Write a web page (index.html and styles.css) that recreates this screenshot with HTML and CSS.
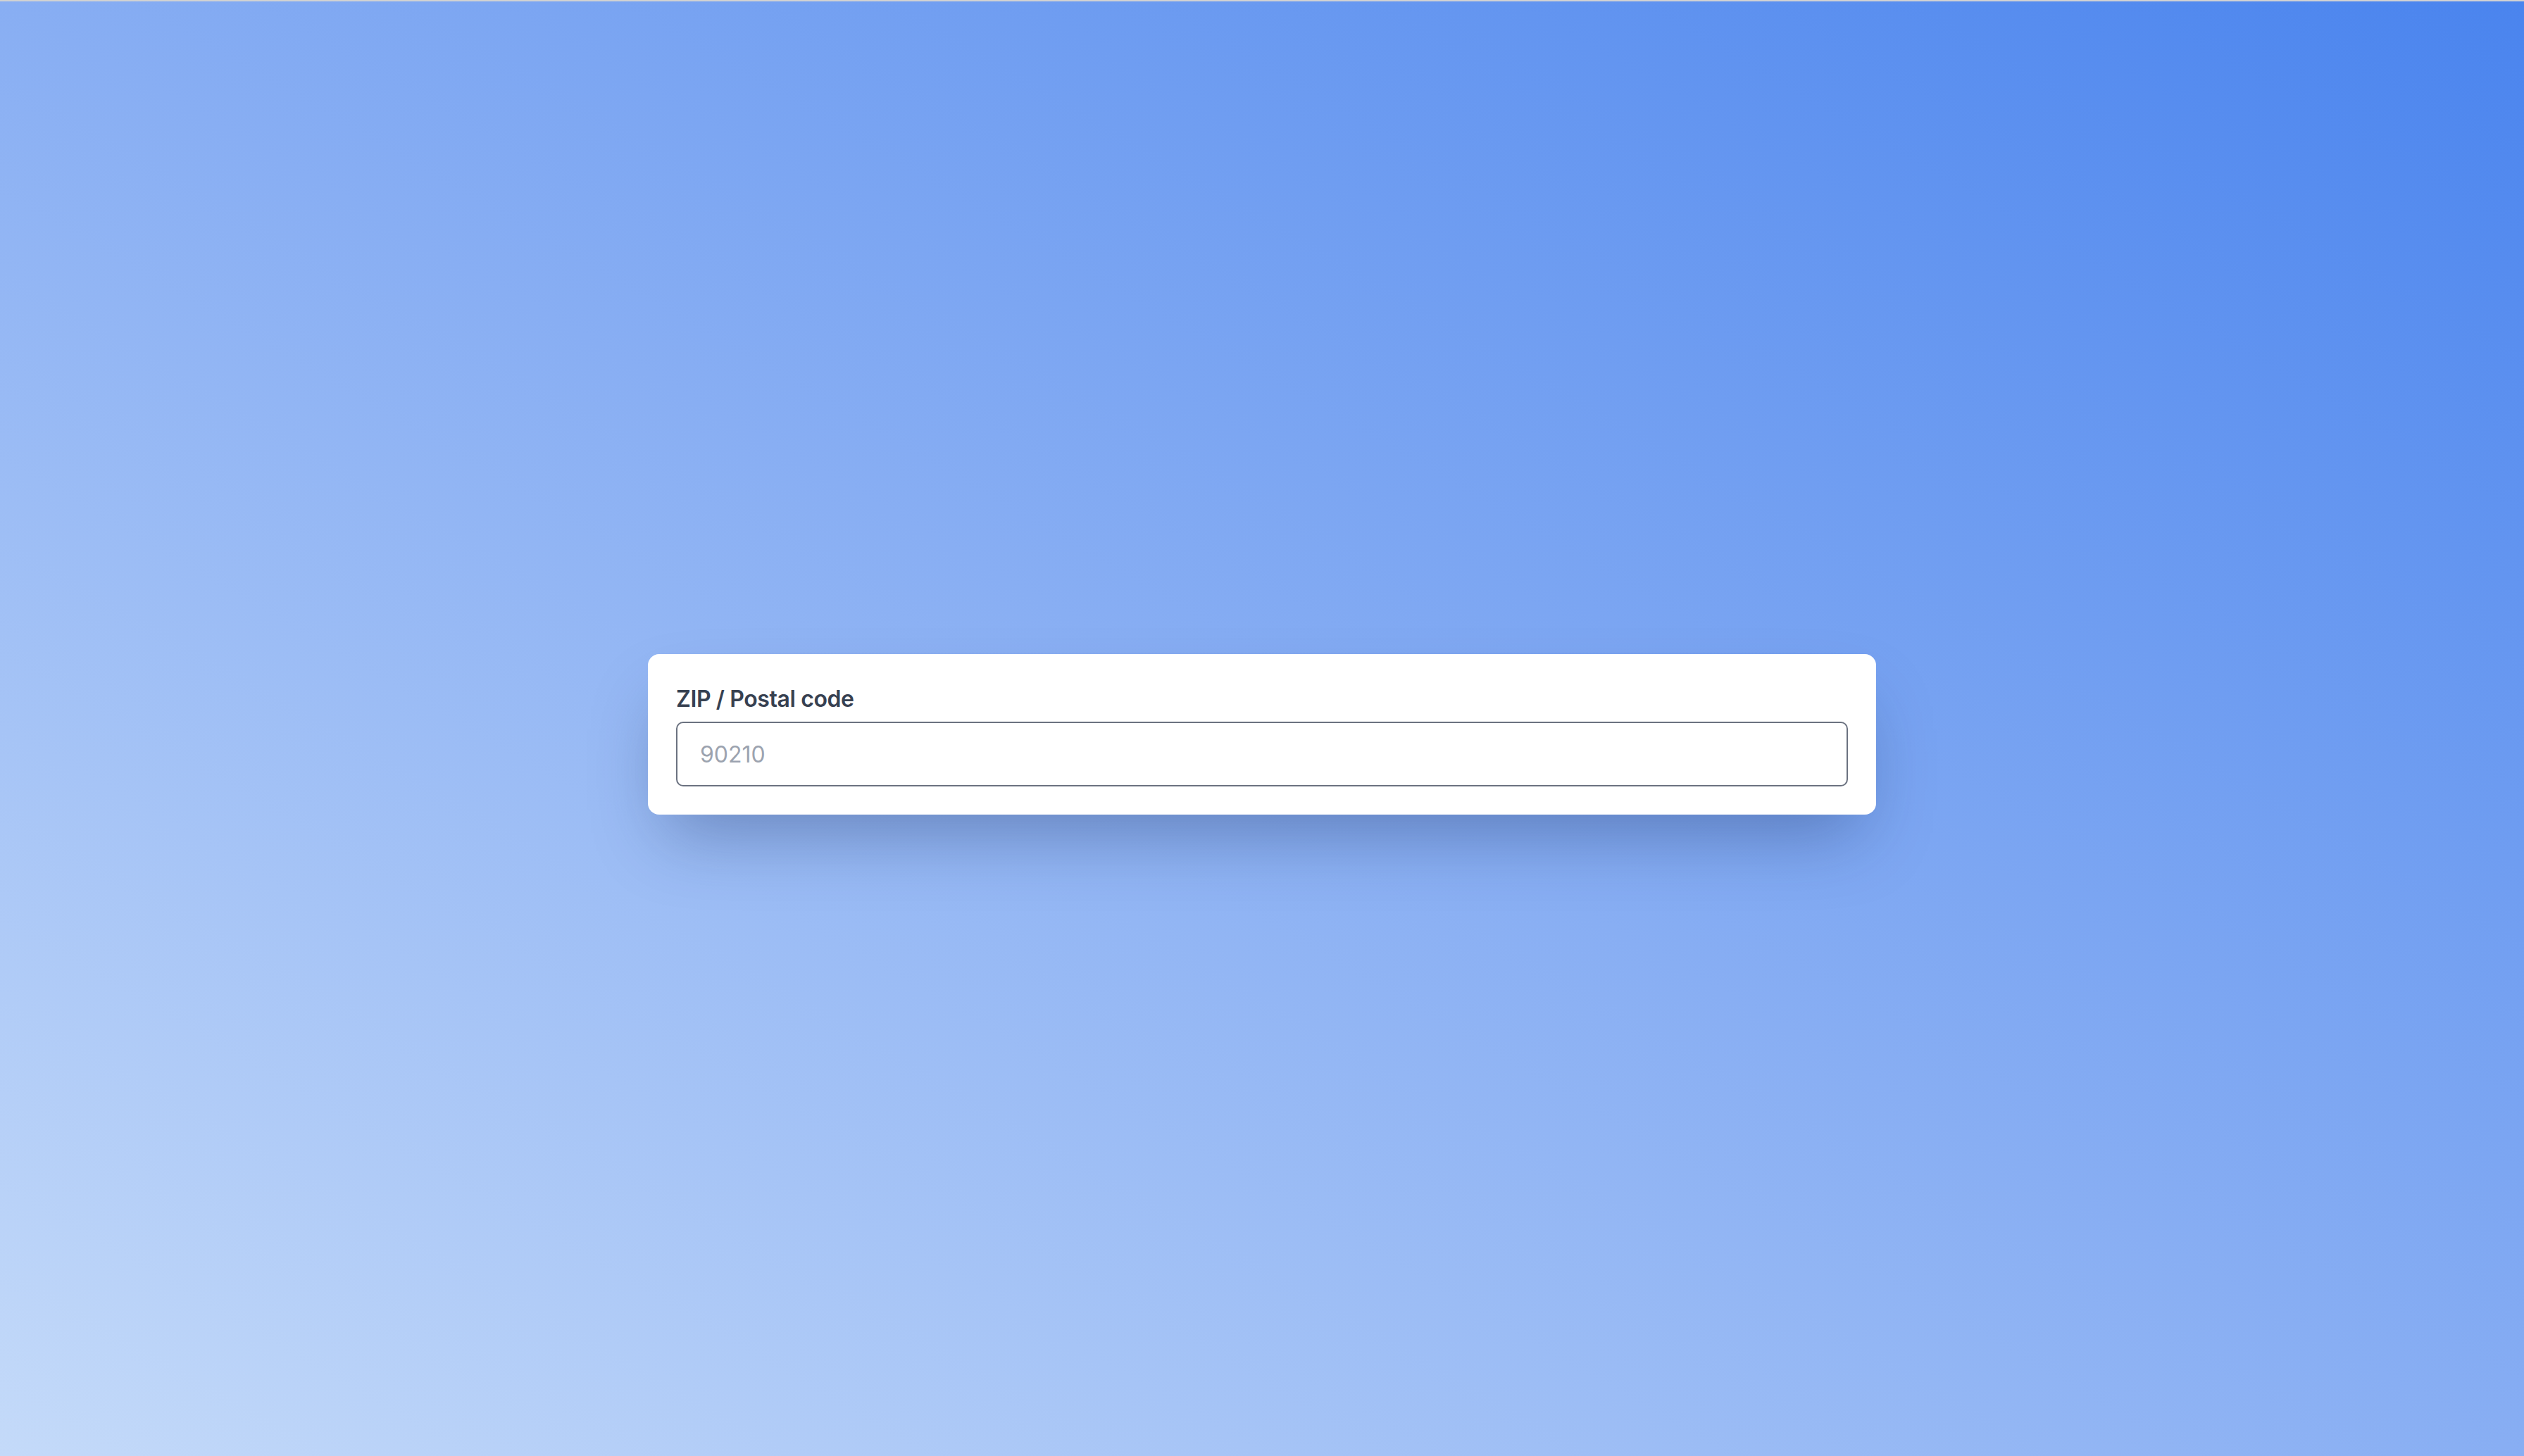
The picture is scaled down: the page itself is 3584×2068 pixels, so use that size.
FILE: index.html
```html
<!DOCTYPE html>
<html lang="en">
<head>
<meta charset="utf-8">
<title>ZIP / Postal code</title>
<link rel="stylesheet" href="styles.css">
</head>
<body>
<main class="page">
  <form class="card">
    <label class="field-label" for="zip">ZIP / Postal code</label>
    <input class="field-input" id="zip" type="text" placeholder="90210">
  </form>
</main>
</body>
</html>
```
FILE: styles.css
```css
* { box-sizing: border-box; }
html, body { margin: 0; padding: 0; height: 100%; }
body {
  border-top: 2px solid #d2d2d2;
  font-family: Inter, "Noto Sans", "Liberation Sans", sans-serif;
  background: linear-gradient(to top right, #c4daf9 0%, #88aef3 50%, #4a84ee 100%);
  overflow: hidden;
}
.page {
  height: 100%;
  display: flex;
  align-items: center;
  justify-content: center;
  padding-top: 16px;
}
.card {
  width: 1744px;
  background: #ffffff;
  border-radius: 16px;
  padding: 40px;
  display: flex;
  flex-direction: column;
  gap: 8px;
  box-shadow: 0 50px 100px -24px rgba(20, 40, 90, 0.35);
}
.field-label {
  font-size: 32px;
  line-height: 48px;
  font-weight: 600;
  letter-spacing: -0.4px;
  color: #374151;
}
.field-input {
  display: block;
  width: 100%;
  height: 92px;
  margin: 0;
  padding: 20px 32px;
  border: 2px solid #6b7280;
  border-radius: 10px;
  font-family: inherit;
  font-size: 32px;
  line-height: 48px;
  color: #111827;
  background: #ffffff;
  outline: none;
}
.field-input::placeholder { color: #9ca3af; }
```
